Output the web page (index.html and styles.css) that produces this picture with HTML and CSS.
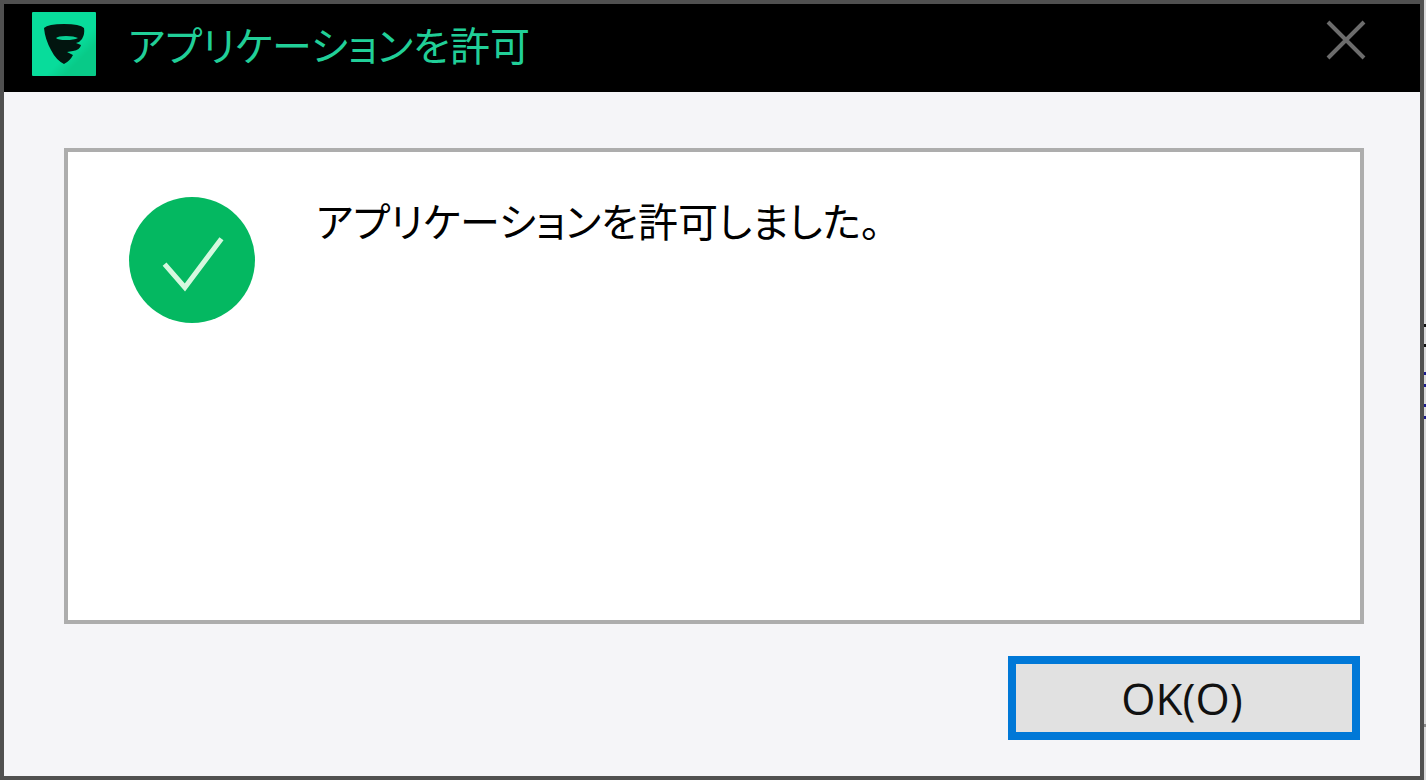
FILE: index.html
```html
<!DOCTYPE html>
<html lang="ja">
<head>
<meta charset="utf-8">
<meta name="viewport" content="width=device-width, initial-scale=1">
<title>アプリケーションを許可</title>
<link rel="stylesheet" href="styles.css">
</head>
<body class="desktop">
<main class="dialog" role="dialog" aria-labelledby="dialog-title">
  <header class="titlebar">
    <svg class="logo" viewBox="0 0 64 64" aria-hidden="true">
      <defs>
        <linearGradient id="tile" x1="0" y1="0" x2="1" y2="1">
          <stop offset="0.6" stop-color="#08dc9b"/>
          <stop offset="0.75" stop-color="#08ca88"/>
        </linearGradient>
      </defs>
      <rect width="64" height="64" rx="1" fill="url(#tile)"/>
      <path d="M12 16Q16 12 32 12Q48 12 52 16Q53 22 50 27Q48 30 44 31L49 33Q48 38 41 39L35 40L41 43Q38 49 32 52Q24 48 19 38Q13 27 12 16Z" fill="#02150f"/>
      <path d="M24 26Q26 24 34 24Q42 24 46 26Q42 28 34 28Q26 28 24 26Z" fill="#08d094"/>
    </svg>
    <h1 class="title" id="dialog-title">アプリケーションを許可</h1>
    <button class="close" type="button" aria-label="閉じる">
      <svg class="close-icon" viewBox="0 0 40 40" aria-hidden="true">
        <path d="M2 2L38 38M38 2L2 38" fill="none" stroke="#6c6c6c" stroke-width="4"/>
      </svg>
    </button>
  </header>
  <div class="content">
    <section class="panel">
      <svg class="status" viewBox="0 0 126 126" aria-hidden="true">
        <circle cx="63" cy="63" r="62" fill="#04b861"/>
        <path d="M36 67L56 90L92 42" fill="none" stroke="#d5f8df" stroke-width="5"/>
      </svg>
      <p class="message">アプリケーションを許可しました。</p>
    </section>
    <footer class="actions">
      <button class="ok" type="button" accesskey="o">OK(O)</button>
    </footer>
  </div>
</main>
</body>
</html>
```
FILE: styles.css
```css
* {
  box-sizing: border-box;
}

.desktop {
  margin: 0;
  padding-right: 2px;
  min-height: 100vh;
  display: flex;
  background:
    linear-gradient(#111, #111) right 324px / 2px 3px no-repeat,
    linear-gradient(#111, #111) right 344px / 2px 3px no-repeat,
    linear-gradient(#1c1c90, #1c1c90) right 372px / 2px 3px no-repeat,
    linear-gradient(#1c1c90, #1c1c90) right 384px / 2px 3px no-repeat,
    linear-gradient(#1c1c90, #1c1c90) right 404px / 2px 3px no-repeat,
    linear-gradient(#1c1c90, #1c1c90) right 416px / 2px 3px no-repeat,
    linear-gradient(#888, #888) right 724px / 2px 3px no-repeat,
    #d9d9da;
  font-family: "Noto Sans CJK JP", sans-serif;
}

.dialog {
  flex: 1;
  display: flex;
  flex-direction: column;
  border: 4px solid #505050;
  background: #f5f5f8;
}

.titlebar {
  display: flex;
  align-items: flex-start;
  padding: 8px 52px 16px 28px;
  background: #000;
}

.logo {
  width: 64px;
  height: 64px;
}

.title {
  flex: 1;
  margin: 0 0 0 32px;
  color: #21cf98;
  font-size: 40px;
  font-weight: 400;
  line-height: 64px;
  font-feature-settings: "palt";
  white-space: nowrap;
}

.close {
  display: flex;
  margin: 8px 2px 0 0;
  padding: 0;
  border: 0;
  background: none;
}

.close-icon {
  width: 40px;
  height: 40px;
}

.content {
  flex: 1;
  display: flex;
  flex-direction: column;
  gap: 32px;
  padding: 56px 56px 36px 60px;
}

.panel {
  flex: 1;
  display: flex;
  align-items: flex-start;
  gap: 60px;
  padding: 44px 60px;
  border: 4px solid #adadad;
  background: #fff;
}

.status {
  flex: none;
  width: 128px;
  height: 128px;
}

.message {
  margin: 0;
  color: #000;
  font-size: 40px;
  line-height: 48px;
  font-feature-settings: "palt";
}

.actions {
  display: flex;
  justify-content: flex-end;
  padding-right: 4px;
}

.ok {
  width: 352px;
  height: 84px;
  padding: 0 4px 0 0;
  border: 8px solid #0078d7;
  background: #e1e1e1;
  color: #111;
  font-family: "Open Sans", sans-serif;
  font-size: 44px;
  line-height: 64px;
}
```
